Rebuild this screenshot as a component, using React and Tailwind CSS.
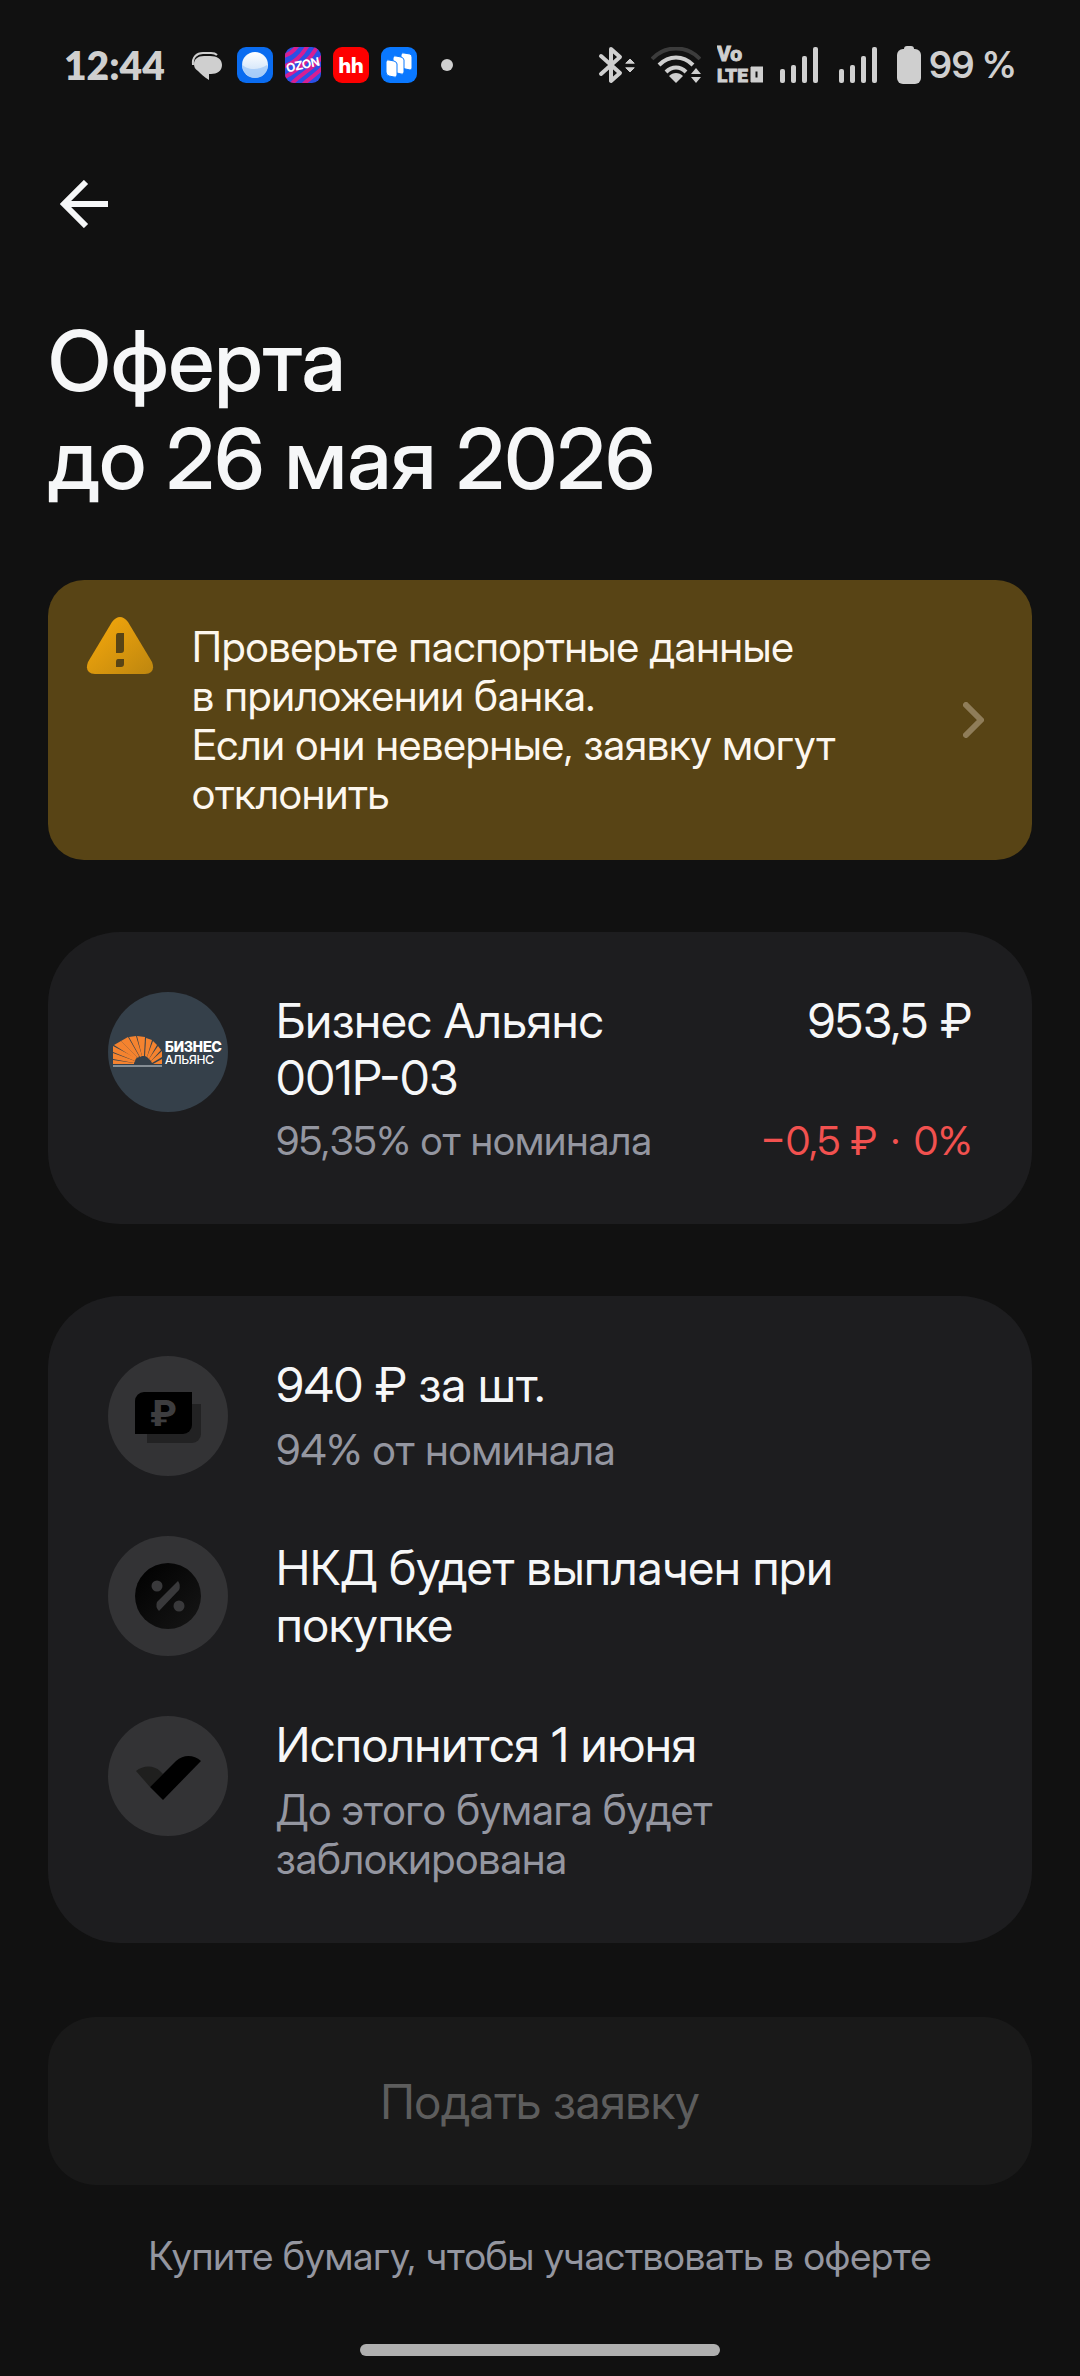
import React from 'react'

const iconBox = "w-[120px] h-[120px] shrink-0 rounded-full bg-[#333335] flex items-center justify-center"

function SignalBars(){
  return (
    <svg width="43" height="36" viewBox="0 0 43 36" fill="#cfcfcf">
      <rect x="1" y="22" width="5" height="14" rx="2" />
      <rect x="12" y="18" width="5" height="18" rx="2" />
      <rect x="23" y="9" width="5" height="27" rx="2" />
      <rect x="34" y="0" width="5" height="36" rx="2" />
    </svg>
  )
}

function StatusBar(){
  return (
    <div className="flex items-center justify-between h-[130px] px-4 text-[#cfcfcf]">
      <div className="flex items-center gap-3">
        <span className="font-[Lato,sans-serif] font-extrabold text-[39px] leading-[48px] w-[105px]">12:44</span>
        <svg className="ml-2" width="36" height="36" viewBox="0 0 36 36">
          <path d="M4 18C3 10 8 6 14 6h8q4 0 6 2" fill="none" stroke="#cfcfcf" strokeWidth="2" />
          <path d="M15 9h6c7 0 12 3 12 9s-5 9-11 9h-2v6c-5-3-8-6-11-9-3-2-4-4-4-7 0-5 4-8 10-8z" fill="#cfcfcf" />
        </svg>
        <svg width="36" height="36" viewBox="0 0 36 36">
          <defs>
            <linearGradient id="ball" x1="0" y1="0" x2="0" y2="1">
              <stop offset="0" stopColor="#ffffff" />
              <stop offset="1" stopColor="#c3dcf8" />
            </linearGradient>
          </defs>
          <rect width="36" height="36" rx="9" fill="#0a6cf0" />
          <circle cx="18" cy="18" r="13" fill="url(#ball)" />
          <path d="M5 17c4 6 16 7 25 1 2 8-6 13-12 13S5 25 5 17z" fill="#8fc0f8" opacity=".6" />
        </svg>
        <svg width="36" height="36" viewBox="0 0 36 36">
          <defs><clipPath id="oz"><rect width="36" height="36" rx="9" /></clipPath></defs>
          <g clipPath="url(#oz)">
            <rect width="36" height="36" fill="#2b50e6" />
            <g stroke="#d61f93" strokeWidth="4" fill="none">
              <path d="M-4 10C4 8 10 4 14-4" />
              <path d="M-4 20C8 18 18 8 24-4" />
              <path d="M-4 32C8 26 26 14 34-4" />
              <path d="M4 40C12 28 28 24 40 6" />
              <path d="M16 40C22 32 32 28 40 18" />
            </g>
            <text x="18" y="22" textAnchor="middle" transform="rotate(-12 18 18)" fill="#fff" fontFamily="Inter Display, Inter, sans-serif" fontWeight="700" fontSize="12">OZON</text>
          </g>
        </svg>
        <svg width="36" height="36" viewBox="0 0 36 36">
          <rect width="36" height="36" rx="9" fill="#fe0000" />
          <text x="18" y="26" textAnchor="middle" fill="#fff" fontFamily="Inter Display, Inter, sans-serif" fontWeight="800" fontSize="21">hh</text>
        </svg>
        <svg width="36" height="36" viewBox="0 0 36 36">
          <rect width="36" height="36" rx="9" fill="#0a78ff" />
          <g fill="#fff" stroke="#0a78ff" strokeWidth="1">
            <path d="M20 8q0-3 3-2l6 1q2 1 2 3v11q0 2-2 2l-9-2z" />
            <path d="M12 11q0-3 3-2l5 1q3 1 3 3v12q0 3-3 2l-8-2z" />
            <path d="M5 15q0-3 3-2l5 1q3 1 3 3v11q0 3-3 2l-5-1q-3-1-3-4z" />
          </g>
        </svg>
        <span className="w-3 h-3 rounded-full bg-[#cfcfcf] ml-3"></span>
      </div>
      <div className="flex items-center gap-4">
        <svg width="37" height="38" viewBox="0 0 37 38" fill="none" stroke="#cfcfcf" strokeWidth="4" strokeLinejoin="round" strokeLinecap="round">
          <path d="M3 10l19 17-9 8V3l9 8L3 28" />
          <path d="M28 17l4-4 4 4z M28 22l4 4 4-4z" fill="#cfcfcf" strokeWidth="1" />
        </svg>
        <svg width="50" height="36" viewBox="0 0 50 36" fill="none" stroke="#cfcfcf" strokeWidth="4">
          <path d="M1 12C14-2 36-2 49 12" stroke="#3c3c3c" />
          <path d="M8 18c10-10 24-10 34 0" />
          <path d="M15 25c6-6 14-6 20 0" />
          <path d="M18 29c4-4 10-4 14 0l-7 7z" fill="#cfcfcf" stroke="none" />
          <path d="M40 27l5-6 5 6z M40 30l5 6 5-6z" fill="#cfcfcf" stroke="none" />
        </svg>
        <svg width="46" height="46" viewBox="0 0 46 46" fill="#cfcfcf" stroke="#cfcfcf" strokeWidth="1" fontFamily="Roboto, sans-serif" fontWeight="800">
          <text x="0" y="19" fontSize="21">Vo</text>
          <text x="0" y="40" fontSize="19">LTE</text>
          <path d="M34 25h12v15H34zM38 29v7h3v-7z" fillRule="evenodd" />
        </svg>
        <SignalBars />
        <SignalBars />
        <div className="flex items-center gap-2">
          <svg width="24" height="38" viewBox="0 0 24 38" fill="#cfcfcf">
            <rect x="7" y="0" width="10" height="8" rx="3" />
            <rect x="0" y="3" width="24" height="35" rx="6" />
          </svg>
          <span className="font-semibold text-[37px] leading-[48px]">99 %</span>
        </div>
      </div>
    </div>
  )
}

function CompanyLogo(){
  return (
    <svg className="shrink-0" width="120" height="120" viewBox="0 0 120 120" fontFamily="Inter Display, Inter, sans-serif">
      <circle cx="60" cy="60" r="60" fill="#35404a" />
      <g fill="#f5832f">
        <path d="M5 68v4h21v-1z" />
        <path d="M5 61v6l21 4 1-2z" />
        <path d="M5 54v6l22 9 1-3z" />
        <path d="M6 53l7-4 16 16-1 2z" />
        <path d="M13 49l7-4 11 19-1 2z" />
        <path d="M21 45l7-1 6 20-2 1z" />
        <path d="M29 44l8 1-1 19h-2z" />
        <path d="M38 46l6 2-5 17-2-1z" />
        <path d="M45 49l4 4-8 14-2-2z" />
        <path d="M50 54l3 4-10 11-2-2z" />
        <path d="M54 59v6l-10 6-1-2z" />
        <path d="M54 67v5h-9z" />
      </g>
      <path d="M5 74h49" stroke="#d8dde0" strokeWidth="1" />
      <text x="57" y="60" fontWeight="800" fontSize="14" fill="#fff">БИЗНЕС</text>
      <text x="57" y="72" fontWeight="500" fontSize="12" fill="#fff">АЛЬЯНС</text>
    </svg>
  )
}

export default function App(){
  return (
    <div className="min-h-screen flex flex-col bg-[#111111] px-12 pb-5 font-['Inter_Display',Inter,sans-serif] text-[#f6f7f8]">
      <StatusBar />
      <header>
        <div className="h-[148px] flex items-center">
          <button aria-label="Назад" className="p-3">
            <svg width="48" height="48" viewBox="0 0 48 48" fill="none" stroke="#f6f7f8" strokeWidth="6">
              <path d="M26 2L4 24l22 22M4 24h44" />
            </svg>
          </button>
        </div>
        <h1 className="mt-[34px] font-medium text-[84px] leading-[98px]">Оферта<br />до 26 мая 2026</h1>
      </header>

      <main className="flex flex-col gap-[72px] mt-[72px]">
        <button className="flex items-center text-left rounded-[36px] bg-[#584415] py-9 pl-9 pr-12 text-[#fdf7ee]">
          <svg className="shrink-0 self-start mr-9" width="72" height="60" viewBox="0 0 72 60">
            <defs>
              <linearGradient id="warn" x1="0" y1="0" x2="1" y2="1">
                <stop offset="0" stopColor="#f9aa0b" />
                <stop offset="1" stopColor="#bd860f" />
              </linearGradient>
            </defs>
            <path d="M28 6q8-10 16 0l24 40q4 11-7 12H11Q0 57 4 46z" fill="url(#warn)" />
            <path d="M34 17h6v17q0 3-3 3h-5V20q0-3 2-3zM34 43h6v5q0 3-3 3h-5v-5q0-3 2-3z" fill="#584415" />
          </svg>
          <span className="flex-1 py-1.5 text-[42px] leading-[49px]">
            Проверьте паспортные данные<br />в приложении банка.<br />Если они неверные, заявку могут<br />отклонить
          </span>
          <svg className="shrink-0" width="21" height="36" viewBox="0 0 21 36" fill="none" stroke="#8f7d59" strokeWidth="6" strokeLinecap="round" strokeLinejoin="round">
            <path d="M3 3l15 15L3 33" />
          </svg>
        </button>

        <section className="flex gap-12 rounded-[72px] bg-[#1d1d1f] p-[60px]">
          <CompanyLogo />
          <div className="flex-1 grid grid-cols-[1fr_auto] gap-y-3">
            <h2 className="text-[48px] leading-[57px]">Бизнес Альянс<br />001P-03</h2>
            <p className="text-[48px] leading-[57px] text-right">953,5 ₽</p>
            <p className="text-[40px] leading-[46px] text-[#9496a0]">95,35% от номинала</p>
            <p className="text-[40px] leading-[46px] text-right text-[#f2514f]">−0,5 ₽ <span className="mx-1">·</span> 0%</p>
          </div>
        </section>

        <ul className="flex flex-col gap-[60px] rounded-[72px] bg-[#1d1d1f] p-[60px]">
          <li className="flex gap-12">
            <div className={iconBox}>
              <svg width="66" height="66" viewBox="0 0 66 66">
                <path d="M12 21h54v30a9 9 0 0 1-9 9H12z" fill="#222223" />
                <path d="M9 9h48v33a9 9 0 0 1-9 9H0V18a9 9 0 0 1 9-9z" fill="#000" />
                <text x="28" y="43" textAnchor="middle" fontFamily="Inter Display, Inter, sans-serif" fontWeight="800" fontSize="36" fill="#3d3d3f">₽</text>
              </svg>
            </div>
            <div>
              <h3 className="text-[48px] leading-[57px]">940 ₽ за шт.</h3>
              <p className="mt-3 text-[42px] leading-[49px] text-[#9496a0]">94% от номинала</p>
            </div>
          </li>
          <li className="flex items-center gap-12">
            <div className={iconBox}>
              <svg width="66" height="66" viewBox="0 0 66 66">
                <defs>
                  <linearGradient id="pct" x1="0" y1="0" x2="1" y2="1">
                    <stop offset="0" stopColor="#000000" />
                    <stop offset="1" stopColor="#161616" />
                  </linearGradient>
                </defs>
                <circle cx="33" cy="33" r="33" fill="url(#pct)" />
                <circle cx="22" cy="23" r="5.5" fill="#39393b" />
                <circle cx="44" cy="43" r="5.5" fill="#39393b" />
                <path d="M43 18q3 4 1 9L24 48q-4-4-2-9z" fill="#39393b" />
              </svg>
            </div>
            <h3 className="text-[48px] leading-[57px]">НКД будет выплачен при<br />покупке</h3>
          </li>
          <li className="flex gap-12">
            <div className={iconBox}>
              <svg width="66" height="66" viewBox="0 0 66 66">
                <path d="M1 28c7-6 18-6 24 0l3 3-13 13z" fill="#1f1f1e" />
                <path d="M15 44l26-26c8-7 18-6 25 0L28 57z" fill="#000" />
              </svg>
            </div>
            <div>
              <h3 className="text-[48px] leading-[57px]">Исполнится 1 июня</h3>
              <p className="mt-3 text-[42px] leading-[49px] text-[#9496a0]">До этого бумага будет<br />заблокирована</p>
            </div>
          </li>
        </ul>
      </main>

      <footer className="flex flex-col flex-1 items-center mt-[74px]">
        <button disabled className="w-full h-[168px] rounded-[48px] bg-[#191919] text-[48px] leading-[57px] text-[#5d5d5d]">Подать заявку</button>
        <p className="my-12 text-[39px] leading-[46px] text-center text-[#9496a0]">Купите бумагу, чтобы участвовать в оферте</p>
        <div className="mt-auto w-1/3 min-w-[360px] h-3 rounded-full bg-[#b0b0b0]"></div>
      </footer>
    </div>
  )
}
